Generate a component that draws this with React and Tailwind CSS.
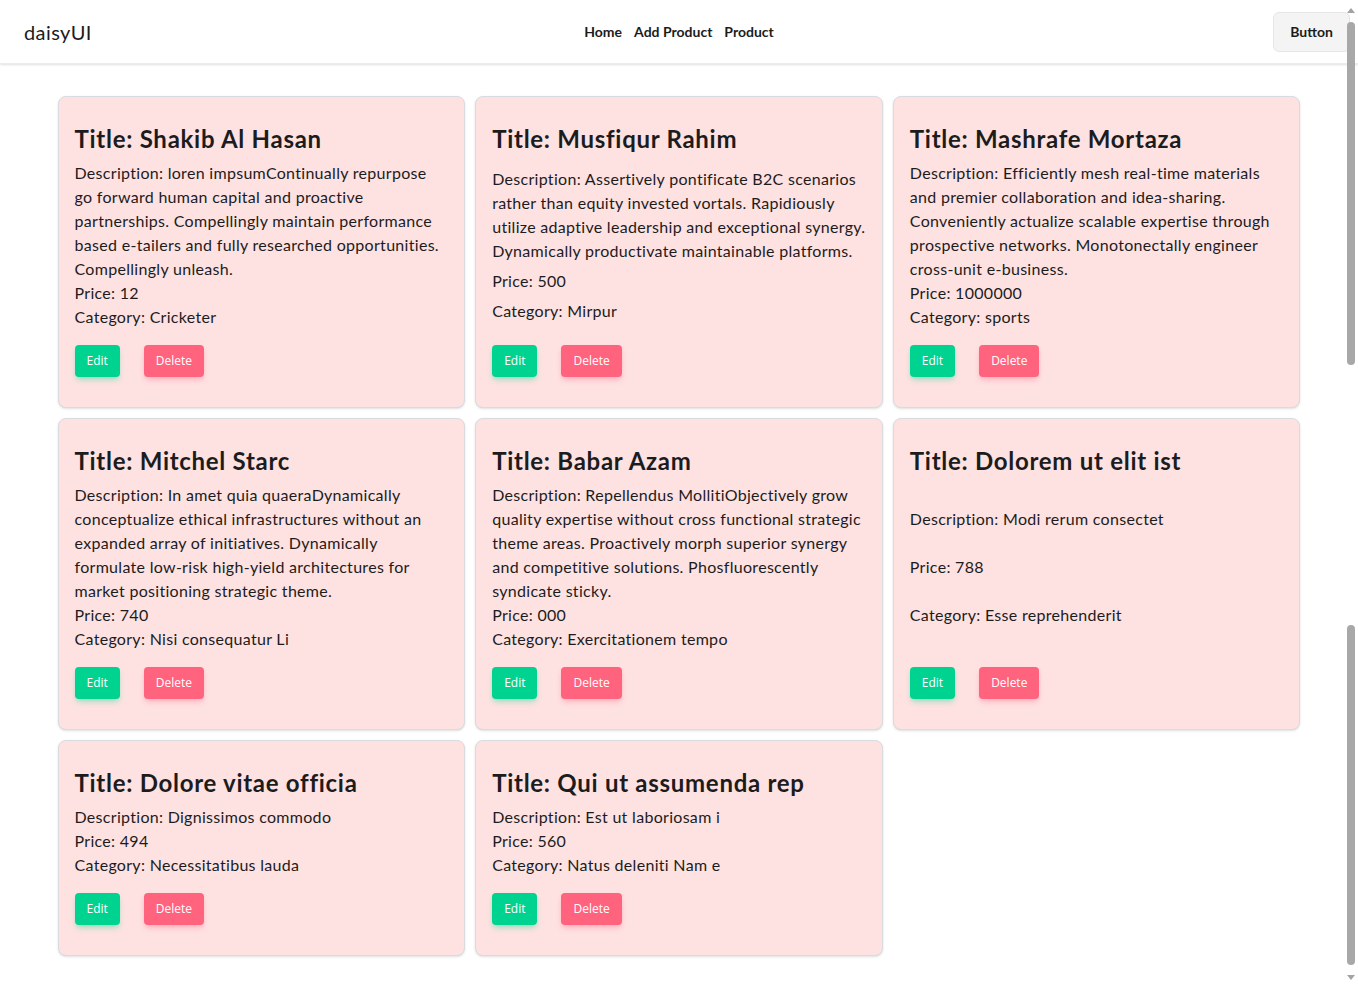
import React from 'react';

const products = [
  {
    title: 'Shakib Al Hasan',
    description:
      'loren impsumContinually repurpose go forward human capital and proactive partnerships. Compellingly maintain performance based e-tailers and fully researched opportunities. Compellingly unleash.',
    price: '12',
    category: 'Cricketer',
  },
  {
    title: 'Musfiqur Rahim',
    description:
      'Assertively pontificate B2C scenarios rather than equity invested vortals. Rapidiously utilize adaptive leadership and exceptional synergy. Dynamically productivate maintainable platforms.',
    price: '500',
    category: 'Mirpur',
  },
  {
    title: 'Mashrafe Mortaza',
    description:
      'Efficiently mesh real-time materials and premier collaboration and idea-sharing. Conveniently actualize scalable expertise through prospective networks. Monotonectally engineer cross-unit e-business.',
    price: '1000000',
    category: 'sports',
  },
  {
    title: 'Mitchel Starc',
    description:
      'In amet quia quaeraDynamically conceptualize ethical infrastructures without an expanded array of initiatives. Dynamically formulate low-risk high-yield architectures for market positioning strategic theme.',
    price: '740',
    category: 'Nisi consequatur Li',
  },
  {
    title: 'Babar Azam',
    description:
      'Repellendus MollitiObjectively grow quality expertise without cross functional strategic theme areas. Proactively morph superior synergy and competitive solutions. Phosfluorescently syndicate sticky.',
    price: '000',
    category: 'Exercitationem tempo',
  },
  {
    title: 'Dolorem ut elit ist',
    description: 'Modi rerum consectet',
    price: '788',
    category: 'Esse reprehenderit',
  },
  {
    title: 'Dolore vitae officia',
    description: 'Dignissimos commodo',
    price: '494',
    category: 'Necessitatibus lauda',
  },
  {
    title: 'Qui ut assumenda rep',
    description: 'Est ut laboriosam i',
    price: '560',
    category: 'Natus deleniti Nam e',
  },
];

const ProductCard = ({ product }) => (
  <div className="bg-[#fee2e2] border border-[#d8dbe0] rounded-lg shadow-sm px-4 pt-[26px] pb-[30px] flex flex-col justify-between">
    <h2 className="text-2xl leading-8 font-bold tracking-[0.03em] mb-[6px]">Title: {product.title}</h2>
    <p className="tracking-[0.3px]">Description: {product.description}</p>
    <p className="tracking-[0.3px]">Price: {product.price}</p>
    <p className="tracking-[0.3px]">Category: {product.category}</p>
    <div className="flex gap-6 mt-4">
      <button className="h-8 px-3 rounded bg-[#00d390] text-white text-xs shadow-md shadow-[#00d390]/30 font-['Open_Sans',sans-serif]">
        Edit
      </button>
      <button className="h-8 px-3 rounded bg-[#ff637d] text-white text-xs shadow-md shadow-[#ff637d]/30 font-['Open_Sans',sans-serif]">
        Delete
      </button>
    </div>
  </div>
);

const Scrollbar = () => (
  <div className="fixed top-0 right-0 w-[15px] h-[990px] pointer-events-none flex flex-col items-center">
    <div className="mt-[8px] w-0 h-0 border-l-[4px] border-r-[4px] border-b-[5px] border-l-transparent border-r-transparent border-b-[#a3a3a3]" />
    <div className="mt-[9px] w-[8px] h-[343px] rounded-full bg-[#a8a8a8]" />
    <div className="mt-[260px] w-[8px] h-[340px] rounded-full bg-[#a8a8a8]" />
    <div className="mt-[10px] w-0 h-0 border-l-[4px] border-r-[4px] border-t-[5px] border-l-transparent border-r-transparent border-t-[#a3a3a3]" />
  </div>
);

export default function App() {
  return (
    <div className="min-h-[990px] bg-white text-[#1c1c1c] font-['Lato',sans-serif]">
      <nav className="h-16 px-2 flex items-center justify-between shadow-[0_1px_2px_rgba(0,0,0,0.12)] border-b border-[#ececec]">
        <div className="flex-1">
          <a className="px-4 text-xl tracking-[0.02em]">daisyUI</a>
        </div>
        <ul className="flex gap-3 text-sm font-bold">
          <li>Home</li>
          <li>Add Product</li>
          <li>Product</li>
        </ul>
        <div className="flex-1 flex justify-end">
          <button className="h-10 px-4 rounded-md bg-[#f4f4f4] border border-[#e6e6e6] text-sm font-bold">
            Button
          </button>
        </div>
      </nav>

      <div className="w-[1243px] mx-auto mt-8 grid grid-cols-3 gap-[10px]">
        {products.map((p) => (
          <ProductCard key={p.title} product={p} />
        ))}
      </div>

      <Scrollbar />
    </div>
  );
}
